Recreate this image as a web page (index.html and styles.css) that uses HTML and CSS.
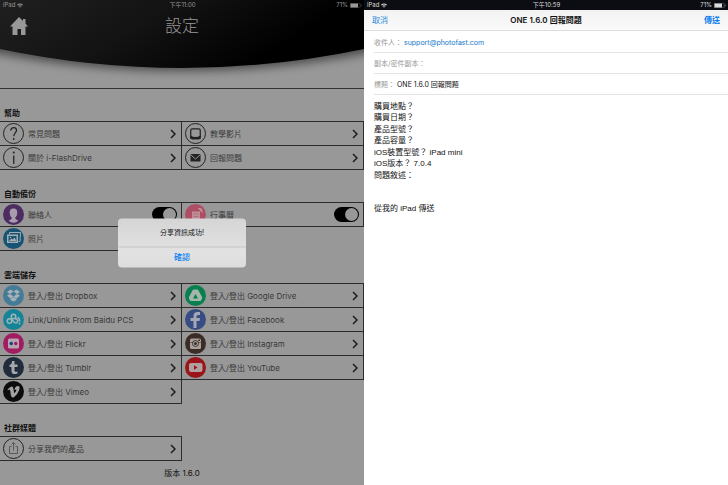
FILE: index.html
```html
<!DOCTYPE html>
<html lang="zh-Hant">
<head>
<meta charset="utf-8">
<meta name="viewport" content="width=device-width, initial-scale=1">
<title>設定</title>
<link rel="stylesheet" href="styles.css">
</head>
<body>
<svg class="defs" aria-hidden="true">
  <symbol id="chevron" viewBox="0 0 6 10"><path d="M1 1l4 4-4 4" fill="none" stroke="#1c1c1c" stroke-width="1.5"/></symbol>
  <symbol id="wifi" viewBox="0 0 14 10"><path d="M0 3.4Q7-2.6 14 3.4L12.4 5Q7 .6 1.6 5Z"/><path d="M2.8 6Q7 2.4 11.2 6L9.6 7.6Q7 5.6 4.4 7.6Z"/><path d="M5.2 8.2Q7 6.8 8.8 8.2L7 10Z"/></symbol>
  <symbol id="battery" viewBox="0 0 24 10"><rect x=".5" y=".5" width="20" height="9" rx="1.5" fill="none" stroke="currentColor" opacity=".6"/><rect x="1" y="1" width="15" height="8"/><path d="M22 3q2 2 0 4z"/></symbol>
</svg>
<main class="screens">
  <section class="settings">
    <header class="banner">
      <svg class="curve" viewBox="0 0 364 88" preserveAspectRatio="none" aria-hidden="true">
        <defs>
          <linearGradient id="night" x1="0" y1="0" x2="1" y2="0.3"><stop offset="0" stop-color="#202020"/><stop offset=".45" stop-color="#141313"/><stop offset=".9" stop-color="#000"/></linearGradient>
          <filter id="soft" x="-10%" y="-20%" width="120%" height="150%"><feGaussianBlur stdDeviation="5"/></filter>
        </defs>
        <path d="M-20 0H384V50Q182 92 -20 50Z" fill="#000" opacity=".5" filter="url(#soft)"/>
        <path d="M0 0H364V49Q182 87 0 49Z" fill="url(#night)"/>
      </svg>
      <div class="status">
        <span class="carrier">iPad <svg class="wifi"><use href="#wifi"/></svg></span>
        <time>下午11:00</time>
        <span class="power">71% <svg class="battery"><use href="#battery"/></svg></span>
      </div>
      <div class="titlebar">
        <a class="home" href="#" aria-label="首頁"><svg viewBox="0 0 18 18"><path d="M9 0L13 4V2h2.500V6.500L18 9.500H15.500V18H11V12H7.500V18H2.500V9.500H0Z"/></svg></a>
        <h1>設定</h1>
      </div>
    </header>

    <h2>幫助</h2>
    <div class="grid">
      <a class="row" href="#"><svg class="icon" viewBox="0 0 42 42"><circle class="ring" cx="21" cy="21" r="20"/><path class="line" d="M15.500 15q.5-6 6-6t5.500 5.500c0 5-5.500 5.500-5.500 12"/><circle cx="21.500" cy="32" r="1.800"/></svg><span>常見問題</span><svg class="chevron"><use href="#chevron"/></svg></a>
      <a class="row" href="#"><svg class="icon" viewBox="0 0 42 42"><circle class="ring" cx="21" cy="21" r="20"/><rect class="line" x="11.500" y="11.500" width="19" height="20" rx="3"/><path d="M11 25q10 6 20 0v7H11z"/></svg><span>教學影片</span><svg class="chevron"><use href="#chevron"/></svg></a>
      <a class="row" href="#"><svg class="icon" viewBox="0 0 42 42"><circle class="ring" cx="21" cy="21" r="20"/><path class="line" d="M21.500 17v17"/><circle cx="21.500" cy="11" r="2"/></svg><span>關於 i-FlashDrive</span><svg class="chevron"><use href="#chevron"/></svg></a>
      <a class="row" href="#"><svg class="icon" viewBox="0 0 42 42"><circle class="ring" cx="21" cy="21" r="20"/><rect x="11" y="14" width="20" height="15" rx="1"/><path d="M11 15l10 9 10-9" fill="none" stroke="#989898" stroke-width="2"/></svg><span>回報問題</span><svg class="chevron"><use href="#chevron"/></svg></a>
    </div>

    <h2>自動備份</h2>
    <div class="grid">
      <label class="row toggle"><svg class="icon" viewBox="0 0 42 42"><circle cx="21" cy="21" r="21" fill="#4c2c61"/><path fill="#a79bad" d="M21 9c-6 0-8 4-7.500 9 .3 4 1.500 7 4 9 0 4-3 4-6 6 5 6 14 6 19 0-3-2-6-2-6-6 2.500-2 3.700-5 4-9C29 13 27 9 21 9z"/></svg><span>聯絡人</span><input type="checkbox" class="switch" checked></label>
      <label class="row toggle"><svg class="icon" viewBox="0 0 42 42"><circle cx="21" cy="21" r="21" fill="#ad4f64"/><path fill="#c08e98" d="M14 15h16v16H14zM25 8h6q4 1 4 6v4l-4-4z"/><path d="M17 20h10M17 25h10" stroke="#ad4f64" stroke-width="1"/></svg><span>行事曆</span><input type="checkbox" class="switch" checked></label>
      <label class="row toggle"><svg class="icon" viewBox="0 0 42 42"><circle cx="21" cy="21" r="21" fill="#175374"/><path d="M13 13V9h22l-1 18h-3" fill="none" stroke="#a4adb1" stroke-width="2"/><path fill="#a4adb1" fill-rule="evenodd" d="M8 13h22v17H8zM11 16v11h16V16z"/><path fill="#a4adb1" d="M12 26l5-5 3 2 3-4 4 7z"/><circle cx="15" cy="19" r="1.500" fill="#a4adb1"/></svg><span>照片</span><input type="checkbox" class="switch" checked></label>
    </div>

    <h2>雲端儲存</h2>
    <div class="grid">
      <a class="row" href="#"><svg class="icon" viewBox="0 0 42 42"><circle cx="21" cy="21" r="21" fill="#447b96"/><path fill="#a7b3b8" d="M15 9l6 4-7 5-6-4zM27 9l7 5-6 4-7-5zM8 21l6-3 7 5-6 4zM28 18l6 3-7 6-6-4zM15 28l6-4 6 4v2l-6 3-6-3z"/></svg><span>登入/登出 Dropbox</span><svg class="chevron"><use href="#chevron"/></svg></a>
      <a class="row" href="#"><svg class="icon" viewBox="0 0 42 42"><circle cx="21" cy="21" r="21" fill="#07804f"/><path fill="#a4b5ac" fill-rule="evenodd" d="M18 9h6q2 0 3 2l7 13q1 2 0 3l-2 4q-1 1-3 1H13q-2 0-3-1l-2-4q-1-1 0-3l7-13q1-2 3-2zM21 18l-5 9h10z"/></svg><span>登入/登出 Google Drive</span><svg class="chevron"><use href="#chevron"/></svg></a>
      <a class="row" href="#"><svg class="icon" viewBox="0 0 42 42"><circle cx="21" cy="21" r="21" fill="#158497"/><g fill="none" stroke="#a0b4b7" stroke-width="3"><circle cx="13" cy="24" r="4.500"/><circle cx="21" cy="15" r="4.500"/><path d="M16 20l7 7q3 2 5 0 3-4-1-7l-3-1M29 17q4 1 4 6v2"/></g><circle cx="33" cy="29" r="1.800" fill="#a0b4b7"/></svg><span>Link/Unlink From Baidu PCS</span><svg class="chevron"><use href="#chevron"/></svg></a>
      <a class="row" href="#"><svg class="icon" viewBox="0 0 42 42"><circle cx="21" cy="21" r="21" fill="#374c83"/><path fill="#a3a8b4" d="M17 38V24h-6v-6h6v-4q0-8 8-8h5v6h-4q-3 0-3 3v3h7l-1 6h-6v14z"/></svg><span>登入/登出 Facebook</span><svg class="chevron"><use href="#chevron"/></svg></a>
      <a class="row" href="#"><svg class="icon" viewBox="0 0 42 42"><circle cx="21" cy="21" r="21" fill="#a01d61"/><rect x="10" y="11" width="22" height="20" rx="3" fill="#b5a4ad"/><circle cx="16.500" cy="21" r="3.500" fill="#173e86"/><circle cx="25.500" cy="21" r="3.500" fill="#a01d61"/></svg><span>登入/登出 Flickr</span><svg class="chevron"><use href="#chevron"/></svg></a>
      <a class="row" href="#"><svg class="icon" viewBox="0 0 42 42"><circle cx="21" cy="21" r="21" fill="#3b2d25"/><rect x="10" y="11" width="22" height="21" rx="3" fill="#a69f9b"/><path d="M10 19h22" stroke="#3b2d25" stroke-width="1"/><circle cx="21" cy="21" r="6.500" fill="#3b2d25"/><circle cx="21" cy="21" r="5" fill="#a69f9b"/><circle cx="21" cy="21" r="3" fill="#3b2d25"/><path d="M27 13h3v3h-3z" fill="#3b2d25"/></svg><span>登入/登出 Instagram</span><svg class="chevron"><use href="#chevron"/></svg></a>
      <a class="row" href="#"><svg class="icon" viewBox="0 0 42 42"><circle cx="21" cy="21" r="21" fill="#202c3b"/><path fill="#a5a9ad" d="M18 8h5v7h6v5h-6v7q0 4 6 2v4q-12 4-12-5v-8h-4v-4q5-1 5-8z"/></svg><span>登入/登出 Tumblr</span><svg class="chevron"><use href="#chevron"/></svg></a>
      <a class="row" href="#"><svg class="icon" viewBox="0 0 42 42"><circle cx="21" cy="21" r="21" fill="#9b1419"/><rect x="8" y="12" width="27" height="18" rx="4" fill="#b0a0a0"/><path d="M18 16.500v9l7-4.500z" fill="#9b1419"/></svg><span>登入/登出 YouTube</span><svg class="chevron"><use href="#chevron"/></svg></a>
      <a class="row" href="#"><svg class="icon" viewBox="0 0 42 42"><circle cx="21" cy="21" r="21" fill="#0c0c0c"/><path fill="#a2a2a2" d="M9 17q7-7 9-6c4 1 3 13 5 13 2-1 5-6 3-7q-1 0-3 1 1-8 7-8c5 0 3 7 1 11-3 6-9 13-12 12-5-1-3-15-6-16q-1 0-3 1.500z"/></svg><span>登入/登出 Vimeo</span><svg class="chevron"><use href="#chevron"/></svg></a>
    </div>

    <h2>社群媒體</h2>
    <div class="grid">
      <a class="row" href="#"><svg class="icon" viewBox="0 0 42 42"><circle class="ring" cx="21" cy="21" r="20"/><path d="M17 17h-4v14h16V17h-4M21 25V9M17 13l4-4 4 4" fill="none" stroke="#444" stroke-width="1.500"/></svg><span>分享我們的產品</span><svg class="chevron"><use href="#chevron"/></svg></a>
    </div>
    <p class="version">版本 1.6.0</p>

    <div class="alert" role="alertdialog" aria-labelledby="alert-text">
      <p id="alert-text">分享資訊成功!</p>
      <button type="button">確認</button>
    </div>
  </section>

  <section class="mail">
    <div class="status">
      <span class="carrier">iPad <svg class="wifi"><use href="#wifi"/></svg></span>
      <time>下午10:59</time>
      <span class="power">71% <svg class="battery"><use href="#battery"/></svg></span>
    </div>
    <header class="navbar">
      <button type="button">取消</button>
      <h1>ONE 1.6.0 回報問題</h1>
      <button type="button" class="send">傳送</button>
    </header>
    <form class="compose">
      <div class="field"><label for="to">收件人：</label><input id="to" class="address" type="email" value="support@photofast.com"></div>
      <div class="field"><label for="cc">副本/密件副本：</label><input id="cc" type="text"></div>
      <div class="field"><label for="subject">標題：</label><input id="subject" type="text" value="ONE 1.6.0 回報問題"></div>
      <div class="message">
        <p>購買地點？<br>購買日期？</p>
        <p>產品型號？<br>產品容量？</p>
        <p>iOS裝置型號？ iPad mini<br>iOS版本？ 7.0.4</p>
        <p>問題敘述：</p>
        <p class="signature">從我的 iPad 傳送</p>
      </div>
    </form>
  </section>
</main>
</body>
</html>
```
FILE: styles.css
```css
* { box-sizing: border-box; }
body, h1, h2, p { margin: 0; }
body {
  font-family: Inter, "Noto Sans CJK TC", sans-serif;
  font-size: 8px;
  background: #fff;
}
a { color: inherit; text-decoration: none; }
button, input { font: inherit; border: 0; padding: 0; background: none; }
.defs { position: absolute; width: 0; height: 0; }

.screens {
  display: grid;
  grid-template-columns: 1fr 1fr;
  min-height: 100vh;
}

/* status bar */
.status {
  display: grid;
  grid-template-columns: 1fr auto 1fr;
  align-items: center;
  height: 10px;
  padding: 0 2px 0 3px;
  font-size: 6px;
  line-height: 10px;
}
.status svg { fill: currentColor; }
.carrier, .power { display: flex; align-items: center; gap: 2px; }
.power { justify-content: flex-end; }
.wifi { width: 6px; height: 5px; }
.battery { width: 12px; height: 5px; }

/* settings */
.settings {
  position: relative;
  background: #989898;
  color: #111;
}
.banner {
  position: relative;
  height: 89px;
  border-bottom: 1px solid #333;
  color: #989898;
}
.curve { position: absolute; inset: 0; width: 100%; height: 100%; }
.banner .status, .titlebar { position: relative; }
.titlebar {
  display: grid;
  grid-template-columns: 1fr auto 1fr;
  align-items: center;
  height: 32px;
  padding: 0 10px;
}
.titlebar h1 {
  font-size: 17px;
  line-height: 32px;
  font-weight: 300;
}
.home svg { display: block; width: 18px; height: 18px; fill: #989898; }

h2 {
  height: 32px;
  padding: 16px 4px 0;
  font-size: 8px;
  line-height: 17px;
  font-weight: 700;
}
.grid {
  display: grid;
  grid-template-columns: 1fr 1fr;
  padding-top: 1px;
}
.row {
  display: flex;
  align-items: center;
  gap: 4px;
  height: 24px;
  padding: 0 5px 0 3px;
  color: #383838;
  border-right: 1px solid #2c2c2c;
  border-bottom: 1px solid #2c2c2c;
  box-shadow: 0 -1px #2c2c2c;
}
.toggle { padding-right: 4px; }
.row span { flex: 1; }
.icon { width: 21px; height: 21px; fill: #222; }
.ring { fill: none; stroke: #222; stroke-width: 2; }
.line { fill: none; stroke: #222; stroke-width: 2.5; }
.chevron { width: 6px; height: 10px; }
.switch {
  appearance: none;
  display: flex;
  justify-content: flex-end;
  width: 25px;
  height: 15px;
  margin: 0;
  padding: 1px;
  border-radius: 8px;
  background: #000;
}
.switch::before {
  content: "";
  width: 13px;
  height: 13px;
  border-radius: 50%;
  background: #989898;
}
.version { padding-top: 5px; line-height: 14px; text-align: center; }

.alert {
  position: absolute;
  top: 50%;
  left: 50%;
  width: 128px;
  transform: translate(-50%, -50%);
  border-radius: 4px;
  background: linear-gradient(#d5d5d5, #e2e2e2 70%, #dcdcdc);
  text-align: center;
}
.alert p {
  font-size: 7px;
  line-height: 28px;
  border-bottom: 1px solid #c6c6c6;
}
.alert button {
  display: block;
  width: 100%;
  height: 20px;
  padding-bottom: 2px;
  color: #087cf0;
  font-weight: 500;
}

/* mail composer */
.mail { background: #fff; color: #111; }
.mail .status { background: #0c0d12; color: #ddd; }
.navbar {
  display: grid;
  grid-template-columns: 1fr auto 1fr;
  align-items: center;
  height: 21px;
  padding: 0 8px 1px;
  background: linear-gradient(#f2f2f2, #fafafa);
  border-bottom: 1px solid #ddd;
}
.navbar h1 { font-size: 8px; font-weight: 600; }
.navbar button { color: #2b8be0; text-align: left; }
.navbar .send { color: #087cf0; text-align: right; font-weight: 600; }
.compose { padding: 1px 0 0 10px; }
.field {
  display: flex;
  align-items: center;
  gap: 2px;
  height: 21px;
  border-bottom: 1px solid #e4e4e4;
  font-size: 7px;
}
.field label { color: #999; line-height: 11px; }
.field input { flex: 1; min-width: 0; height: 11px; color: #111; outline: 0; }
.field .address { color: #1477c8; }
.message {
  display: flex;
  flex-direction: column;
  gap: 1px;
  padding-top: 6px;
  font-family: "Liberation Sans", "Noto Sans CJK TC", sans-serif;
  line-height: 11px;
}
.signature { padding-top: 21px; }
```
